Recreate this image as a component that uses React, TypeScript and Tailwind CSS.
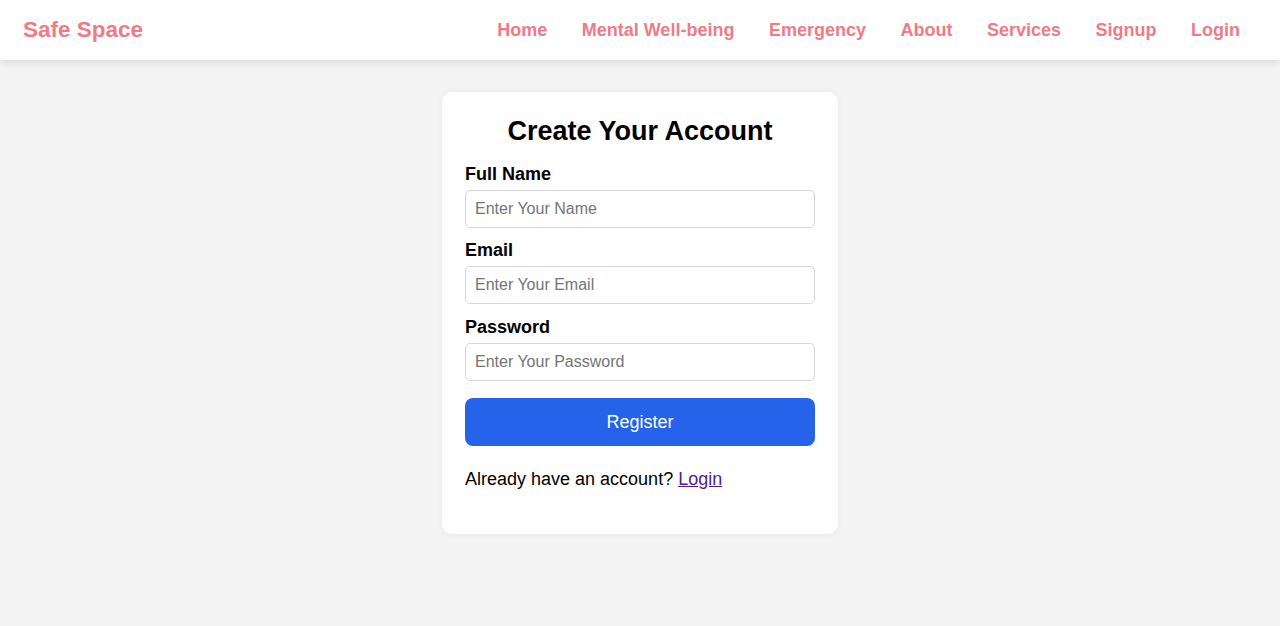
export default function App() {
  const links = ["Home", "Mental Well-being", "Emergency", "About", "Services", "Signup", "Login"];

  return (
    <div className="min-h-[626px] bg-[#f4f4f4] font-['Liberation_Sans',Arial,sans-serif] text-black">
      {/* Header */}
      <header className="flex h-[60px] items-center justify-between bg-white pl-[23px] pr-[40px] shadow-[0_2px_8px_rgba(0,0,0,0.12)]">
        <a href="#" className="text-[22.5px] font-bold text-[#ef7b86]">
          Safe Space
        </a>
        <nav className="flex gap-[34.5px]">
          {links.map((l) => (
            <a key={l} href="#" className="text-[18px] font-bold text-[#ef7b86]">
              {l}
            </a>
          ))}
        </nav>
      </header>

      {/* Signup card */}
      <main className="flex justify-center pt-[32px]">
        <div className="w-[396px] rounded-[10px] bg-white px-[23px] pt-[24px] pb-[44px] shadow-[0_0_10px_rgba(0,0,0,0.06)]">
          <h2 className="mb-[17px] text-center text-[27px] leading-[31px] font-bold">Create Your Account</h2>
          <form onSubmit={(e) => e.preventDefault()}>
            <label className="mb-[5px] block text-[18px] leading-[21px] font-bold">Full Name</label>
            <input
              type="text"
              placeholder="Enter Your Name"
              className="mb-[12px] block h-[38px] w-full rounded-[5px] border border-[#d6d6d6] px-[9px] text-[16px] outline-none placeholder:text-[#757575]"
            />
            <label className="mb-[5px] block text-[18px] leading-[21px] font-bold">Email</label>
            <input
              type="email"
              placeholder="Enter Your Email"
              className="mb-[13px] block h-[38px] w-full rounded-[5px] border border-[#d6d6d6] px-[9px] text-[16px] outline-none placeholder:text-[#757575]"
            />
            <label className="mb-[5px] block text-[18px] leading-[21px] font-bold">Password</label>
            <input
              type="password"
              placeholder="Enter Your Password"
              className="mb-[17px] block h-[38px] w-full rounded-[5px] border border-[#d6d6d6] px-[9px] text-[16px] outline-none placeholder:text-[#757575]"
            />
            <button
              type="submit"
              className="block h-[48px] w-full rounded-[8px] bg-[#2563eb] text-[18px] text-white"
            >
              Register
            </button>
          </form>
          <p className="mt-[23px] text-[18px] leading-[21px]">
            Already have an account?{" "}
            <a href="#" className="text-[#551a8b] underline">
              Login
            </a>
          </p>
        </div>
      </main>
    </div>
  );
}
